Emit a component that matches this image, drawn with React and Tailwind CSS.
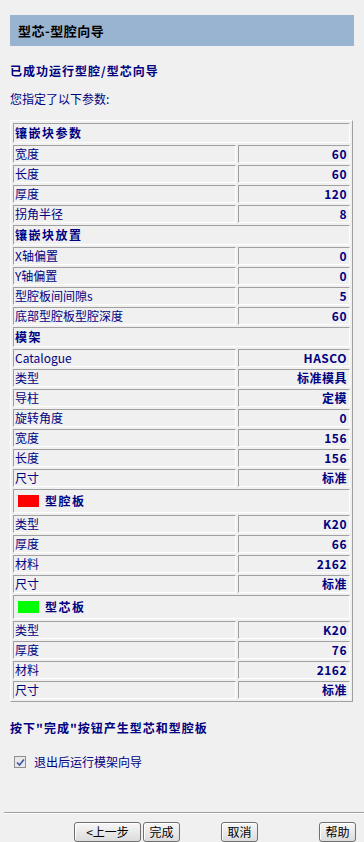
import React from "react";

const font = { fontFamily: '"Noto Sans CJK SC", "Liberation Sans", sans-serif' };

const sections = [
  {
    title: "镶嵌块参数",
    rows: [
      ["宽度", "60"],
      ["长度", "60"],
      ["厚度", "120"],
      ["拐角半径", "8"],
    ],
  },
  {
    title: "镶嵌块放置",
    rows: [
      ["X轴偏置", "0"],
      ["Y轴偏置", "0"],
      ["型腔板间间隙s", "5"],
      ["底部型腔板型腔深度", "60"],
    ],
  },
  {
    title: "模架",
    rows: [
      ["Catalogue", "HASCO"],
      ["类型", "标准模具"],
      ["导柱", "定模"],
      ["旋转角度", "0"],
      ["宽度", "156"],
      ["长度", "156"],
      ["尺寸", "标准"],
    ],
  },
  {
    title: "型腔板",
    swatch: "bg-[#ff0000]",
    rows: [
      ["类型", "K20"],
      ["厚度", "66"],
      ["材料", "2162"],
      ["尺寸", "标准"],
    ],
  },
  {
    title: "型芯板",
    swatch: "bg-[#00ff00]",
    rows: [
      ["类型", "K20"],
      ["厚度", "76"],
      ["材料", "2162"],
      ["尺寸", "标准"],
    ],
  },
];

const cell =
  "border border-t-[#a0a0a0] border-l-[#a0a0a0] border-r-white border-b-white";

const Button = ({ children, className = "" }) => (
  <button
    className={`h-[20px] border border-[#707070] rounded-[3px] bg-gradient-to-b from-[#f7f7f7] to-[#dcdcdc] shadow-[inset_1px_1px_0_#ffffff] text-[12px] leading-[16px] text-black ${className}`}
  >
    {children}
  </button>
);

export default function App() {
  return (
    <div className="w-[364px] h-[842px] bg-[#f0f0f0] overflow-hidden flex flex-col" style={font}>
      {/* Title bar */}
      <div className="mx-[10px] mt-[15px] h-[31px] bg-[#99b4d1] flex items-center pl-[8px]">
        <span className="text-[13px] font-bold text-black tracking-[0.5px]">型芯-型腔向导</span>
      </div>

      <div className="px-[10px] mt-[17px] text-[12px] leading-[16px] font-bold tracking-[1px] text-[#000080]">
        已成功运行型腔/型芯向导
      </div>
      <div className="px-[10px] mt-[12px] text-[12px] leading-[16px] text-[#000080]">
        您指定了以下参数:
      </div>

      {/* Parameter table */}
      <div className="ml-[10px] mt-[13px] w-[343px] border border-t-white border-l-white border-r-[#a0a0a0] border-b-[#a0a0a0] p-[2px] grid grid-cols-[223px_112px] gap-[2px] text-[12px] leading-[16px] text-[#000080]">
        {sections.map((s) => (
          <React.Fragment key={s.title}>
            <div
              className={`${cell} col-span-2 flex items-center gap-[6px] font-bold ${
                s.swatch ? "h-[24px] pl-[4px]" : "h-[20px] pl-[1px]"
              }`}
            >
              {s.swatch && <span className={`w-[21px] h-[12px] ${s.swatch}`} />}
              <span className="tracking-[1.5px]">{s.title}</span>
            </div>
            {s.rows.map(([label, value], i) => (
              <React.Fragment key={s.title + i}>
                <div className={`${cell} h-[18px] pl-[1px] whitespace-nowrap`}>{label}</div>
                <div className={`${cell} h-[18px] pr-[2px] text-right font-bold tracking-[0.5px]`}>{value}</div>
              </React.Fragment>
            ))}
          </React.Fragment>
        ))}
      </div>

      <div className="px-[10px] mt-[18px] text-[12px] leading-[16px] font-bold tracking-[1px] text-[#000080]">
        按下"完成"按钮产生型芯和型腔板
      </div>

      <label className="ml-[14px] mt-[18px] flex items-center gap-[8px] text-[12px] leading-[16px] text-[#000080]">
        <span className="w-[12px] h-[12px] border border-[#8f8f8f] bg-[#e8e8e8] flex items-center justify-center">
          <svg width="9" height="9" viewBox="0 0 9 9">
            <path d="M1 4.5 L3.5 7 L8 1.5" fill="none" stroke="#3b52a8" strokeWidth="1.6" />
          </svg>
        </span>
        退出后运行模架向导
      </label>

      <div className="flex-1" />

      {/* Footer */}
      <div className="ml-[4px] border-t border-t-[#a0a0a0] border-b border-b-white" />
      <div className="h-[20px] mt-[8px] flex text-black shrink-0">
        <Button className="ml-[74px] w-[67px]">&lt;上一步</Button>
        <Button className="ml-[2px] w-[37px]">完成</Button>
        <Button className="ml-[41px] w-[37px]">取消</Button>
        <Button className="ml-[61px] w-[37px]">帮助</Button>
      </div>
    </div>
  );
}
